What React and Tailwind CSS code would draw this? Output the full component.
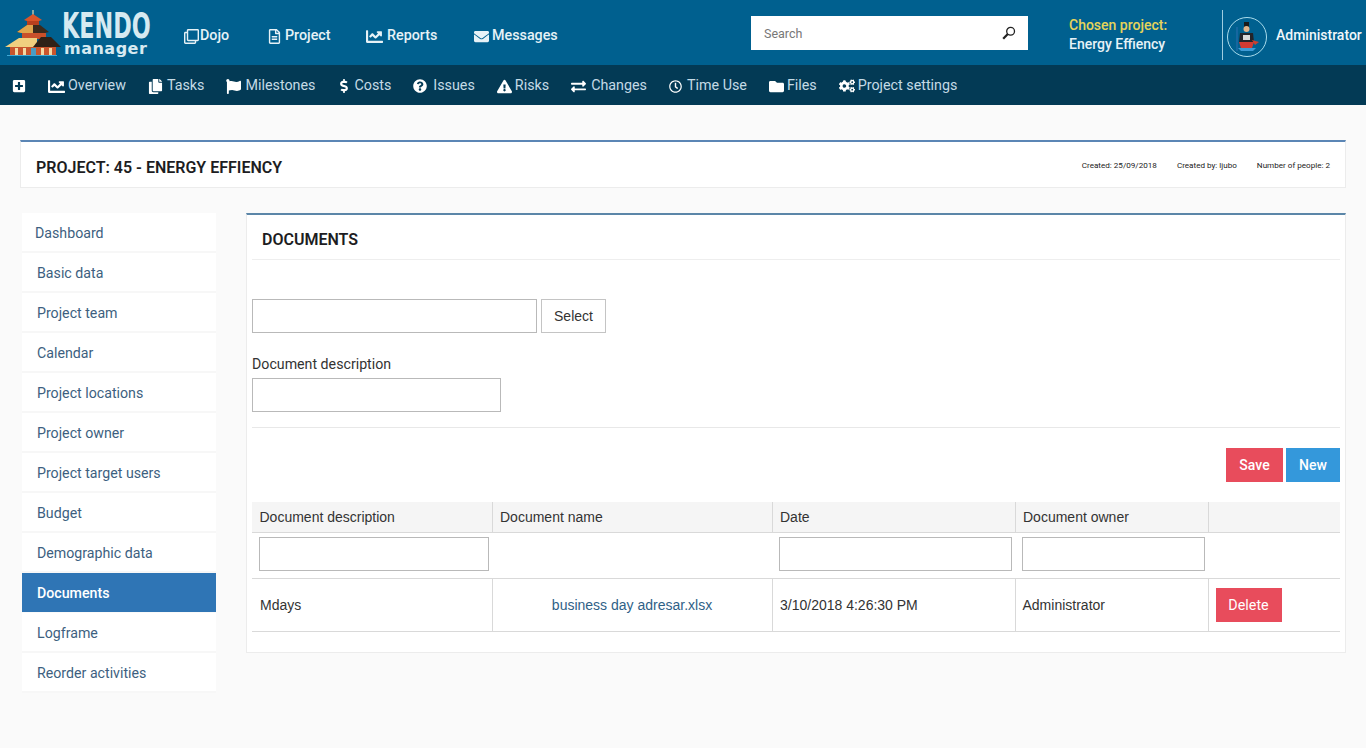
import {
  FaRegClone,
  FaRegFileAlt,
  FaChartLine,
  FaEnvelope,
  FaPlusSquare,
  FaCopy,
  FaFlag,
  FaDollarSign,
  FaQuestionCircle,
  FaExclamationTriangle,
  FaExchangeAlt,
  FaRegClock,
  FaFolder,
  FaCogs,
} from "react-icons/fa";

const TOP_LINKS = [
  { label: "Dojo", icon: FaRegClone, size: 15, slot: "w-[16px]", width: "w-[83px]" },
  { label: "Project", icon: FaRegFileAlt, size: 15, slot: "w-[18px]", width: "w-[99px]" },
  { label: "Reports", icon: FaChartLine, size: 17, slot: "w-[21px]", width: "w-[108px]" },
  { label: "Messages", icon: FaEnvelope, size: 15, slot: "w-[18px]", width: "w-[90px]" },
];

const SUB_LINKS = [
  { label: "Overview", icon: FaChartLine, size: 17, slot: "w-[20px]" },
  { label: "Tasks", icon: FaCopy, size: 15, slot: "w-[19px]" },
  { label: "Milestones", icon: FaFlag, size: 15, slot: "w-[19px]" },
  { label: "Costs", icon: FaDollarSign, size: 14, slot: "w-[17px]" },
  { label: "Issues", icon: FaQuestionCircle, size: 14, slot: "w-[20px]" },
  { label: "Risks", icon: FaExclamationTriangle, size: 15, slot: "w-[18px]" },
  { label: "Changes", icon: FaExchangeAlt, size: 15, slot: "w-[20px]" },
  { label: "Time Use", icon: FaRegClock, size: 13, slot: "w-[18px]" },
  { label: "Files", icon: FaFolder, size: 15, slot: "w-[18px]" },
  { label: "Project settings", icon: FaCogs, size: 16, slot: "w-[19px]" },
];

const SIDE_LINKS = [
  "Dashboard",
  "Basic data",
  "Project team",
  "Calendar",
  "Project locations",
  "Project owner",
  "Project target users",
  "Budget",
  "Demographic data",
  "Documents",
  "Logframe",
  "Reorder activities",
];

function Pagoda() {
  return (
    <svg width="58" height="46" viewBox="0 0 58 46" className="shrink-0">
      <path d="M30 0v6" stroke="#e8d9b0" strokeWidth="1.2" />
      <path d="M21 10 L30 4 L39 10 L36 11 L24 11Z" fill="#d9552b" />
      <rect x="24" y="11" width="12" height="6" fill="#b8401f" />
      <path d="M14 22 L24 15 L37 15 L46 22 L42 23 L18 23Z" fill="#3b2a1c" />
      <path d="M14 22 L24 15 L30 15 L30 23 L18 23Z" fill="#e0a54d" />
      <rect x="19" y="23" width="24" height="6" fill="#c9502a" />
      <path d="M2 37 L16 28 L34 28 L34 37Z" fill="#f0cf7f" />
      <path d="M30 37 L38 27 L48 27 L58 37Z" fill="#2f2117" />
      <rect x="7" y="37" width="46" height="8" fill="#c9552d" />
      <rect x="12" y="38" width="3" height="7" fill="#f3d9a4" />
      <rect x="20" y="38" width="3" height="7" fill="#f3d9a4" />
      <rect x="28" y="38" width="5" height="7" fill="#4a9cc4" />
      <rect x="38" y="38" width="3" height="7" fill="#f3d9a4" />
      <rect x="46" y="38" width="3" height="7" fill="#f3d9a4" />
      <rect x="4" y="45" width="50" height="1" fill="#3fa9d6" />
    </svg>
  );
}

function Avatar() {
  return (
    <div className="w-[40px] h-[40px] mt-[4px] rounded-full border border-[#a9dcec] flex items-center justify-center shrink-0">
      <svg width="26" height="32" viewBox="0 0 26 32">
        <path d="M3 6v24" stroke="#2d6fb0" strokeWidth="1" />
        <rect x="10" y="1" width="5" height="5" fill="#1a1a1a" />
        <circle cx="12.5" cy="8" r="3" fill="#e3b48a" />
        <path d="M6 12 L19 12 L20 21 L5 21Z" fill="#23242a" />
        <rect x="9" y="14" width="7" height="5" fill="#d8d8d8" />
        <path d="M5 21 L20 21 L18 27 L7 27Z" fill="#d13a33" />
        <path d="M18 19 L25 21 L21 24Z" fill="#c9402f" />
        <path d="M4 27 L22 27 L19 30 L7 30Z" fill="#3d9bd6" />
      </svg>
    </div>
  );
}

function SearchGlass() {
  return (
    <svg width="14" height="14" viewBox="0 0 14 14" className="shrink-0">
      <circle cx="8.6" cy="5.2" r="3.9" fill="none" stroke="#222" strokeWidth="1.3" />
      <path d="M5.8 8 L1.2 12.8" stroke="#222" strokeWidth="2.2" />
    </svg>
  );
}

function TopBar() {
  return (
    <div className="h-[65px] bg-[#00608f] flex items-center text-white font-['Roboto',sans-serif]">
      <div className="w-[184px] shrink-0 flex items-center pl-[3px] pt-[1px]">
        <Pagoda />
        <div className="ml-[1px] w-[90px] flex flex-col text-[#d6eaf1] font-['DejaVu_Sans',sans-serif] font-bold whitespace-nowrap">
          <span className="h-[30px] leading-[30px] text-[36px] scale-x-[0.62] origin-left">KENDO</span>
          <span className="h-[15px] leading-[15px] text-[16px] ml-[2px] tracking-[0.5px]">manager</span>
        </div>
      </div>
      <nav className="flex items-center w-[567px] shrink-0 pt-[7px] text-[14.3px] font-medium text-[#e6f2f7]">
        {TOP_LINKS.map(({ label, icon: Icon, size, slot, width }) => (
          <a key={label} className={`flex items-center ${width}`}>
            <span className={`${slot} shrink-0`}>
              <Icon size={size} />
            </span>
            {label}
          </a>
        ))}
      </nav>
      <div className="w-[277px] h-[34px] shrink-0 bg-white flex items-center justify-between pl-[13px] pr-[12px] mt-[1px]">
        <span className="text-[12.5px] text-[#777] pt-[2px]">Search</span>
        <SearchGlass />
      </div>
      <div className="w-[153px] ml-[41px] pt-[4px] shrink-0 text-[14px] leading-[19px] font-medium">
        <p className="text-[#e6d45a]">Chosen project:</p>
        <p className="text-[#e6f2f7]">Energy Effiency</p>
      </div>
      <div className="h-[50px] border-l border-[#9fcde0] flex items-center pl-[4px] gap-[9px] mt-[5px] whitespace-nowrap">
        <Avatar />
        <span className="text-[14px] font-medium text-[#f0f7fa]">Administrator</span>
      </div>
    </div>
  );
}

function SubBar() {
  return (
    <div className="h-[40px] bg-[#033a55] flex items-center pl-[12px] pt-[2px] text-[14.3px] text-[#c5dbe6] font-['Roboto',sans-serif]">
      <FaPlusSquare size={14} className="text-white shrink-0 mr-[22px]" />
      <nav className="flex items-center gap-[22px]">
        {SUB_LINKS.map(({ label, icon: Icon, size, slot }) => (
          <a key={label} className="flex items-center whitespace-nowrap">
            <span className={`${slot} shrink-0`}>
              <Icon size={size} className="text-white" />
            </span>
            {label}
          </a>
        ))}
      </nav>
    </div>
  );
}

function SideNav() {
  return (
    <ul className="w-[194px] shrink-0 ml-[2px] text-[14.2px] text-[#3d5f80] font-['Roboto',sans-serif]">
      {SIDE_LINKS.map((item, i) => (
        <li
          key={item}
          className={
            item === "Documents"
              ? "h-[40px] flex items-center pl-[15px] pt-[2px] bg-[#2f75b5] text-white font-medium border-b border-[#fafafa]"
              : `h-[40px] flex items-center pt-[4px] bg-white border-b-2 border-[#f7f7f7] ${i === 0 ? "pl-[13px]" : "pl-[15px]"}`
          }
        >
          {item}
        </li>
      ))}
    </ul>
  );
}

const th = "font-normal text-left pl-[7.5px] pt-[2px] h-[30px] border-b border-r border-[#d9d9d9] last:border-r-0";
const td = "px-[7px] pt-[2px] border-b border-r border-[#d9d9d9] last:border-r-0";
const inputCls = "block h-[34px] border border-[#b9b9b9] bg-white";

function DocumentsPanel() {
  return (
    <section className="flex-1 h-[440px] bg-white border border-[#ececec] border-t-2 border-t-[#5b86a8] px-[5px]">
      <h2 className="h-[45px] border-b border-[#eeeeee] pl-[10px] pt-[15px] text-[16px] leading-[20px] font-semibold text-[#1d1d22] font-['Roboto',sans-serif]">
        DOCUMENTS
      </h2>
      <div className="h-[168px] border-b border-[#e8e8e8] pt-[39px] font-['Roboto',sans-serif]">
        <div className="flex gap-[4px]">
          <input className={`${inputCls} w-[285px]`} />
          <button className="w-[65px] h-[34px] border border-[#c4c4c4] text-[14px] text-[#333] font-['Liberation_Sans',sans-serif]">
            Select
          </button>
        </div>
        <label className="block mt-[21px] text-[14.2px] leading-[20px] text-[#333]">
          Document description
        </label>
        <input className={`${inputCls} w-[249px] mt-[4px]`} />
      </div>
      <div className="flex justify-end gap-[3px] pt-[20px] pb-[20px] text-[14px] font-medium text-white font-['Roboto',sans-serif]">
        <button className="w-[57px] h-[34px] bg-[#e84c5c]">Save</button>
        <button className="w-[54px] h-[34px] bg-[#3498db]">New</button>
      </div>
      <table className="w-[1088px] table-fixed border-collapse text-[14px] text-[#333] font-['Liberation_Sans',sans-serif]">
        <colgroup>
          <col className="w-[240px]" />
          <col className="w-[280px]" />
          <col className="w-[243px]" />
          <col className="w-[193px]" />
          <col />
        </colgroup>
        <thead>
          <tr className="bg-[#f5f5f5]">
            <th className={th}>Document description</th>
            <th className={th}>Document name</th>
            <th className={th}>Date</th>
            <th className={th}>Document owner</th>
            <th className={th}></th>
          </tr>
        </thead>
        <tbody>
          <tr className="h-[46px]">
            <td className="border-b border-[#d9d9d9] pl-[7px] pb-[2px]">
              <input className={`${inputCls} w-[230px]`} />
            </td>
            <td className="border-b border-[#d9d9d9]"></td>
            <td className="border-b border-[#d9d9d9] pl-[7px] pb-[2px]">
              <input className={`${inputCls} w-[233px]`} />
            </td>
            <td className="border-b border-[#d9d9d9] pl-[7px] pb-[2px]">
              <input className={`${inputCls} w-[183px]`} />
            </td>
            <td className="border-b border-[#d9d9d9]"></td>
          </tr>
          <tr className="h-[53px]">
            <td className={`${td} pl-[8px]`}>Mdays</td>
            <td className={`${td} text-center text-[#2f6187]`}>business day adresar.xlsx</td>
            <td className={`${td} pl-[7.5px]`}>3/10/2018 4:26:30 PM</td>
            <td className={td}>Administrator</td>
            <td className="px-[7px] border-b border-[#d9d9d9]">
              <button className="w-[66px] h-[34px] pt-[2px] bg-[#e84c5c] text-white font-['Roboto',sans-serif] text-[14.3px]">
                Delete
              </button>
            </td>
          </tr>
        </tbody>
      </table>
    </section>
  );
}

export default function App() {
  return (
    <div className="min-h-[748px] bg-[#fafafa]">
      <TopBar />
      <SubBar />
      <main className="pt-[35px] px-[20px]">
        <div className="h-[48px] bg-white border border-[#ececec] border-t-2 border-t-[#5b86b5] flex items-center justify-between pl-[15px] pr-[15px] pt-[6px]">
          <h1 className="text-[16px] font-semibold text-[#1d1d22] font-['Roboto',sans-serif]">
            PROJECT: 45 - ENERGY EFFIENCY
          </h1>
          <div className="flex gap-[20px] text-[8.1px] text-[#222] font-['Roboto',sans-serif] -mt-[5px]">
            <span>Created: 25/09/2018</span>
            <span>Created by: ljubo</span>
            <span>Number of people: 2</span>
          </div>
        </div>
        <div className="flex items-start gap-[30px] mt-[25px]">
          <SideNav />
          <DocumentsPanel />
        </div>
      </main>
    </div>
  );
}
